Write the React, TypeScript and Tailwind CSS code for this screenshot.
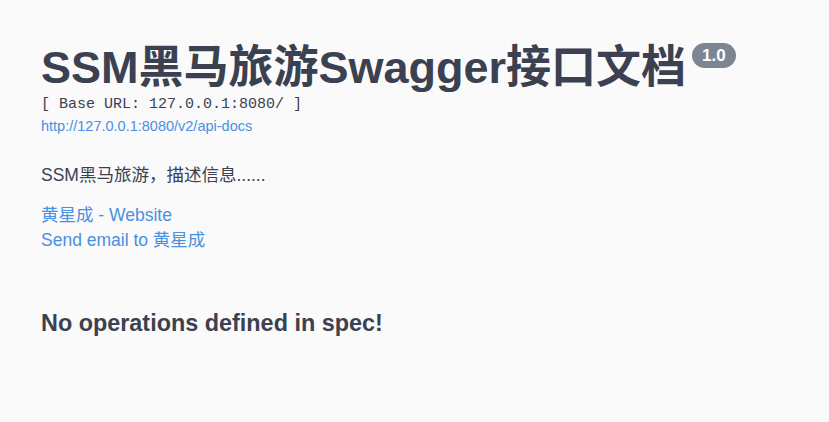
import React from 'react';

const sans = "font-['Liberation_Sans','Noto_Sans_CJK_SC',sans-serif]";

export default function App() {
  return (
    <div className={`min-h-screen w-full bg-[#fafafa] text-[#3b4151] ${sans}`}>
      <div className="px-[41px] pt-[40px]">
        {/* Info */}
        <div className="flex items-start">
          <h2 className="text-[45px] leading-[56px] font-bold text-[#3b4151] whitespace-nowrap">
            SSM黑马旅游Swagger接口文档
          </h2>
          <span className="ml-[6px] mt-[3px] rounded-full bg-[#7d8492] px-[10px] py-[2px] text-[17px] leading-[21px] font-bold text-white">
            1.0
          </span>
        </div>
        <pre className="font-['Liberation_Mono',monospace] text-[15px] leading-[16px] text-[#3b4151] mt-[1px]">
          [ Base URL: 127.0.0.1:8080/ ]
        </pre>
        <a className="block text-[14.5px] leading-[22px] text-[#4990e2] mt-[2px]" href="#">
          http://127.0.0.1:8080/v2/api-docs
        </a>

        <p className="mt-[26px] text-[17.5px] leading-[24px] text-[#3b4151]">SSM黑马旅游，描述信息......</p>

        <div className="mt-[16px] text-[17.5px] leading-[25px] text-[#4990e2]">
          <a className="block" href="#">黄星成 - Website</a>
          <a className="block" href="#">Send email to 黄星成</a>
        </div>

        <h3 className="mt-[56px] text-[23.4px] leading-[28px] font-bold text-[#3b4151]">No operations defined in spec!</h3>
      </div>
    </div>
  );
}
